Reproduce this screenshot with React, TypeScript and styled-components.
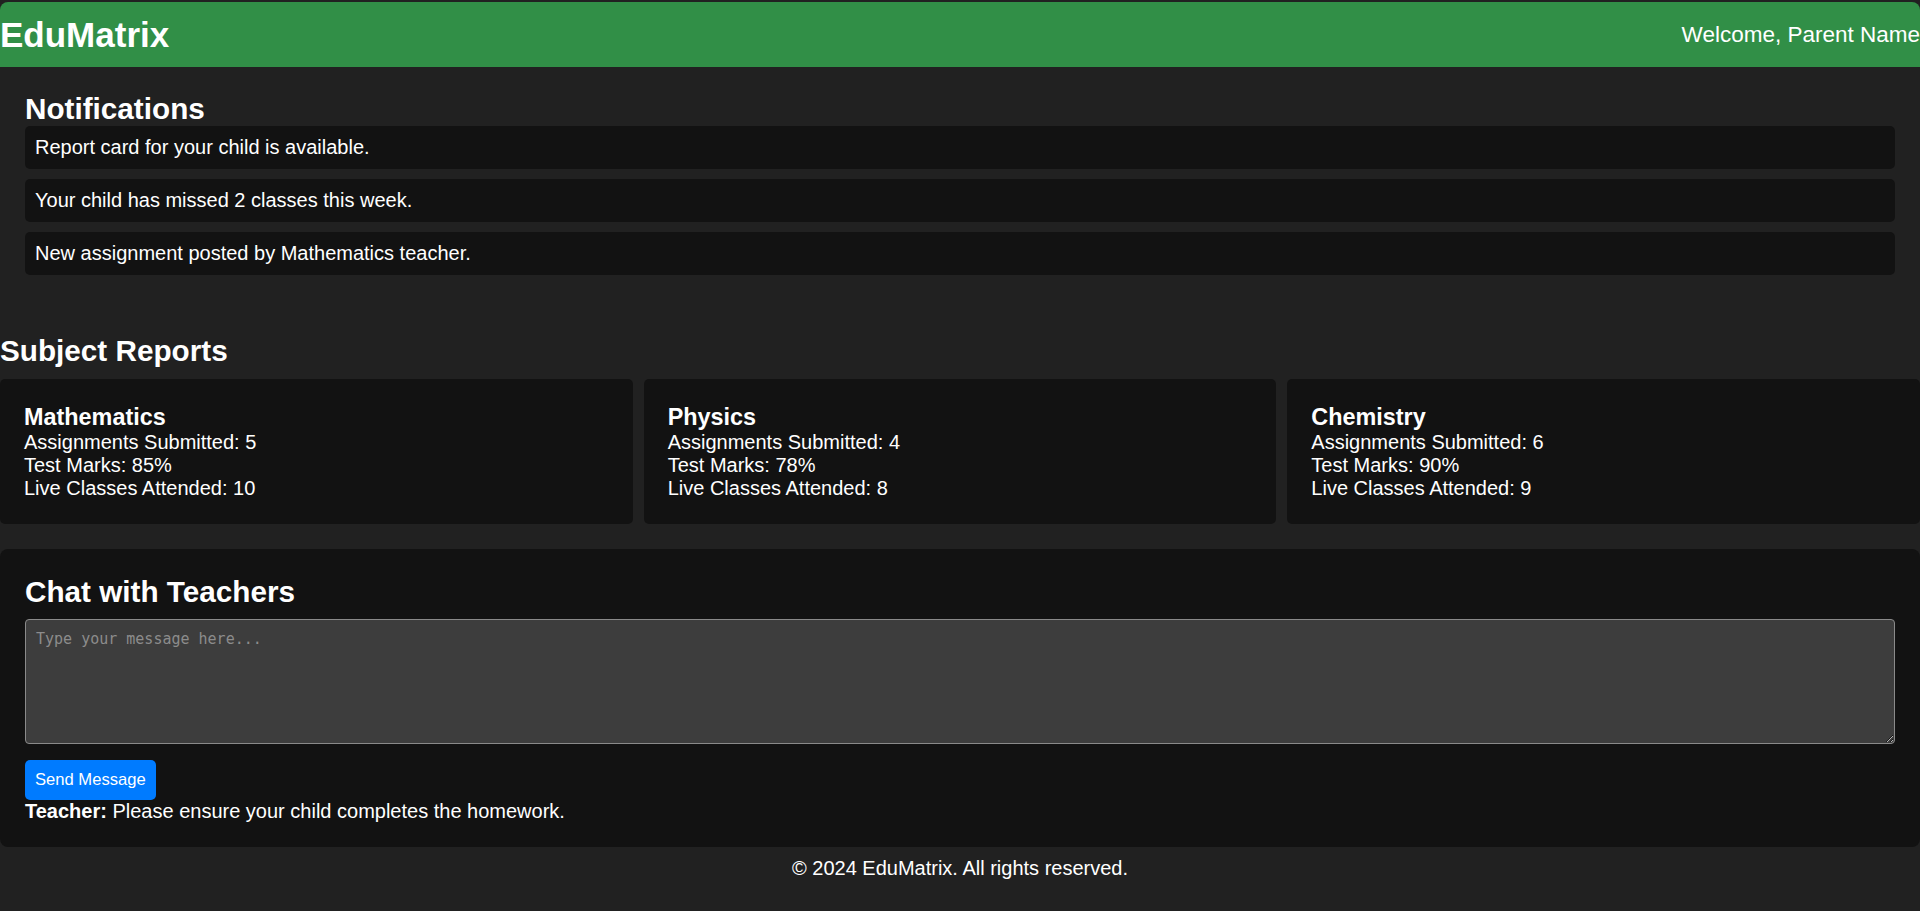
import styled, { createGlobalStyle } from "styled-components";

const GlobalStyle = createGlobalStyle`
  html, body {
    margin: 0;
    padding: 0;
    background: #212121;
    color: #fff;
    font-family: "Liberation Sans", Arial, sans-serif;
    font-size: 20px;
  }
  * {
    box-sizing: border-box;
  }
`;

const Page = styled.div`
  padding-top: 2px;
  min-height: 911px;
  background: #212121;
`;

const Header = styled.header`
  height: 65px;
  display: flex;
  align-items: center;
  justify-content: space-between;
  background: #318f47;
  border-radius: 8px 8px 0 0;
`;

const Logo = styled.h1`
  margin: 0;
  font-size: 35px;
  font-weight: bold;
`;

const Welcome = styled.span`
  font-size: 22.5px;
`;

const Notifications = styled.section`
  padding: 25px 25px 0;
`;

const SectionTitle = styled.h2`
  margin: 0;
  font-size: 29.7px;
  font-weight: bold;
`;

const NoticeList = styled.ul`
  list-style: none;
  margin: 0;
  padding: 0;
  display: flex;
  flex-direction: column;
  gap: 10px;
`;

const Notice = styled.li`
  background: #121212;
  border-radius: 5px;
  padding: 10px;
  line-height: 23px;
`;

const Reports = styled.section`
  margin-top: 59px;
  display: flex;
  flex-direction: column;
  gap: 11px;
`;

const CardRow = styled.div`
  display: grid;
  grid-template-columns: repeat(3, 1fr);
  gap: 11px;
`;

const Card = styled.div`
  background: #121212;
  border-radius: 5px;
  padding: 25px 24px 24px;
  line-height: 23px;
`;

const CardTitle = styled.h3`
  margin: 0;
  font-size: 23.4px;
  line-height: 27px;
  font-weight: bold;
`;

const Chat = styled.section`
  margin-top: 25px;
  background: #121212;
  border-radius: 8px;
  padding: 26px 25px 24px;
`;

const ChatTitle = styled(SectionTitle)`
  margin-bottom: 10px;
`;

const MessageBox = styled.textarea`
  display: block;
  width: 100%;
  height: 125px;
  background: #3d3d3d;
  color: #fff;
  border: 1px solid #8a8a8a;
  border-radius: 4px;
  padding: 10px;
  font-family: "DejaVu Sans Mono", "Liberation Mono", monospace;
  font-size: 15px;

  &::placeholder {
    color: #8c8c8c;
  }
`;

const SendButton = styled.button`
  margin-top: 16px;
  display: block;
  background: #007bff;
  color: #fff;
  border: none;
  border-radius: 5px;
  padding: 10px;
  font-family: "Liberation Sans", Arial, sans-serif;
  font-size: 16.6px;
  line-height: 20px;
`;

const Reply = styled.p`
  margin: 0;
  line-height: 23px;
`;

const Footer = styled.footer`
  padding: 10px 0;
  text-align: center;
  line-height: 23px;
`;

const notices = [
  "Report card for your child is available.",
  "Your child has missed 2 classes this week.",
  "New assignment posted by Mathematics teacher.",
];

const subjects = [
  { name: "Mathematics", assignments: 5, marks: 85, classes: 10 },
  { name: "Physics", assignments: 4, marks: 78, classes: 8 },
  { name: "Chemistry", assignments: 6, marks: 90, classes: 9 },
];

const App = () => (
  <Page>
    <GlobalStyle />
    <Header>
      <Logo>EduMatrix</Logo>
      <Welcome>Welcome, Parent Name</Welcome>
    </Header>

    <Notifications>
      <SectionTitle>Notifications</SectionTitle>
      <NoticeList>
        {notices.map((n) => (
          <Notice key={n}>{n}</Notice>
        ))}
      </NoticeList>
    </Notifications>

    <Reports>
      <SectionTitle>Subject Reports</SectionTitle>
      <CardRow>
        {subjects.map((s) => (
          <Card key={s.name}>
            <CardTitle>{s.name}</CardTitle>
            <div>Assignments Submitted: {s.assignments}</div>
            <div>Test Marks: {s.marks}%</div>
            <div>Live Classes Attended: {s.classes}</div>
          </Card>
        ))}
      </CardRow>
    </Reports>

    <Chat>
      <ChatTitle>Chat with Teachers</ChatTitle>
      <MessageBox placeholder="Type your message here..." />
      <SendButton>Send Message</SendButton>
      <Reply>
        <strong>Teacher:</strong> Please ensure your child completes the homework.
      </Reply>
    </Chat>

    <Footer>© 2024 EduMatrix. All rights reserved.</Footer>
  </Page>
);

export default App;
